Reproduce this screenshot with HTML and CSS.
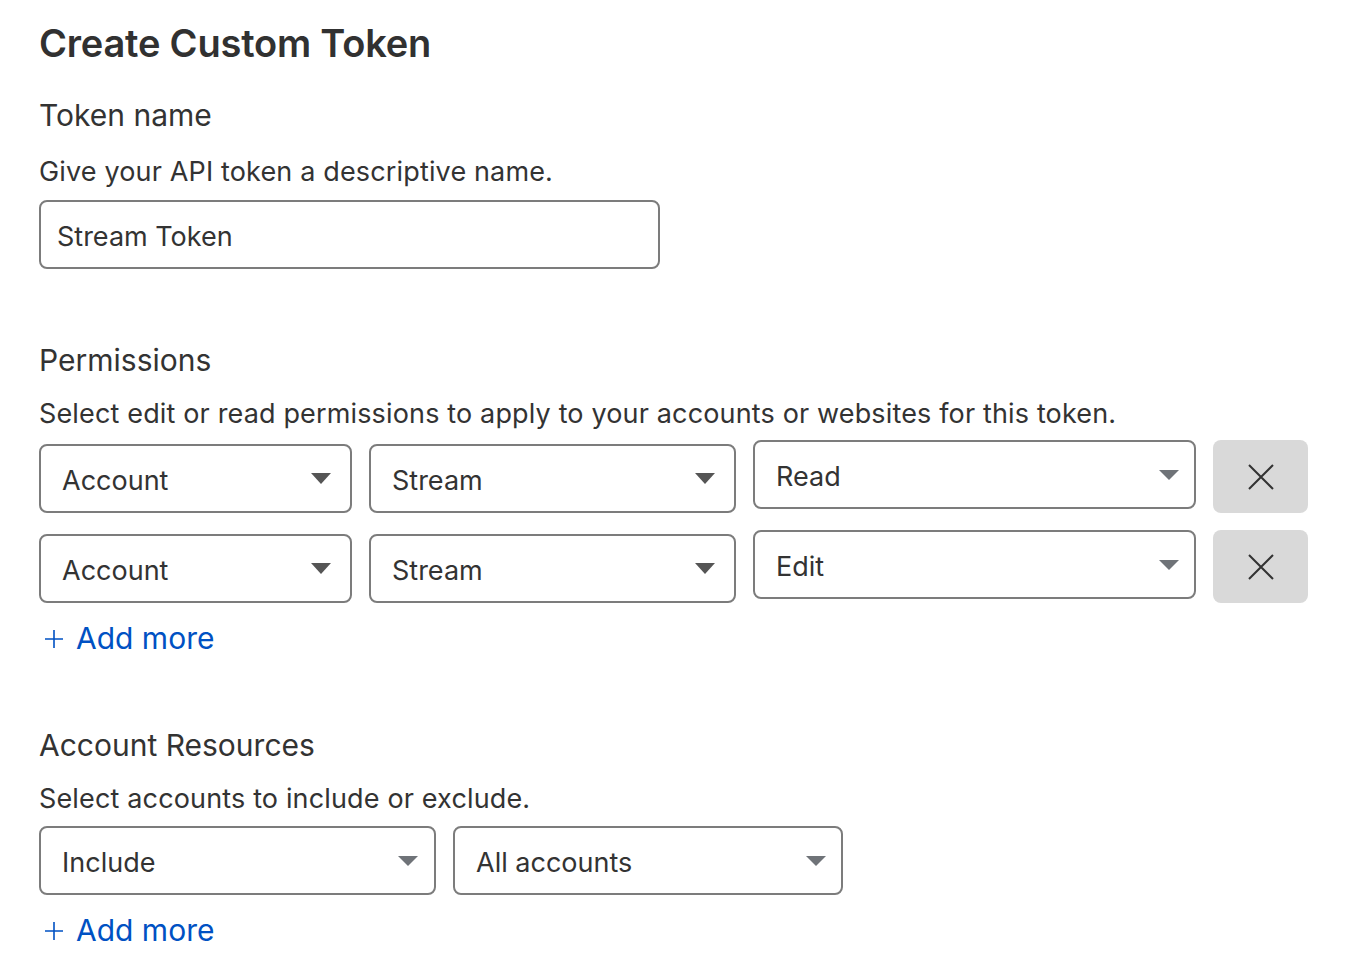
FILE: index.html
```html
<!DOCTYPE html>
<html lang="en">
<head>
<meta charset="utf-8">
<title>Create Custom Token</title>
<link rel="stylesheet" href="styles.css">
</head>
<body>
<main class="page">
  <h1 class="title">Create Custom Token</h1>

  <section class="section">
    <h2 class="heading heading-first">Token name</h2>
    <p class="desc desc-first">Give your API token a descriptive name.</p>
    <div class="input">Stream Token</div>
  </section>

  <section class="section section-perm">
    <h2 class="heading">Permissions</h2>
    <p class="desc">Select edit or read permissions to apply to your accounts or websites for this token.</p>
    <div class="perm-rows">
      <div class="perm-row">
        <div class="select w-type shifted"><span>Account</span><i class="caret"></i></div>
        <div class="select w-item shifted"><span>Stream</span><i class="caret"></i></div>
        <div class="select w-level"><span>Read</span><i class="caret caret-light"></i></div>
        <button class="remove" type="button" aria-label="Remove"><svg width="26" height="26" viewBox="0 0 26 26"><path d="M1 1 L25 25 M25 1 L1 25" stroke="#333" stroke-width="2" fill="none"/></svg></button>
      </div>
      <div class="perm-row">
        <div class="select w-type shifted"><span>Account</span><i class="caret"></i></div>
        <div class="select w-item shifted"><span>Stream</span><i class="caret"></i></div>
        <div class="select w-level"><span>Edit</span><i class="caret caret-light"></i></div>
        <button class="remove" type="button" aria-label="Remove"><svg width="26" height="26" viewBox="0 0 26 26"><path d="M1 1 L25 25 M25 1 L1 25" stroke="#333" stroke-width="2" fill="none"/></svg></button>
      </div>
    </div>
    <a class="add-more" href="#"><svg class="plus" width="18" height="18" viewBox="0 0 18 18"><path d="M9 0 V18 M0 9 H18" stroke="#0051c3" stroke-width="1.6" fill="none"/></svg><span>Add more</span></a>
  </section>

  <section class="section section-res">
    <h2 class="heading">Account Resources</h2>
    <p class="desc">Select accounts to include or exclude.</p>
    <div class="res-row">
      <div class="select w-incl"><span>Include</span><i class="caret caret-light"></i></div>
      <div class="select w-acc"><span>All accounts</span><i class="caret caret-light"></i></div>
    </div>
    <a class="add-more" href="#"><svg class="plus" width="18" height="18" viewBox="0 0 18 18"><path d="M9 0 V18 M0 9 H18" stroke="#0051c3" stroke-width="1.6" fill="none"/></svg><span>Add more</span></a>
  </section>
</main>
</body>
</html>
```

FILE: styles.css
```css
* { box-sizing: border-box; }

html, body {
  margin: 0;
  padding: 0;
  background: #ffffff;
}

body {
  font-family: Inter, "Noto Sans", "Liberation Sans", sans-serif;
  color: #333333;
}

.page {
  padding: 21px 0 0 39px;
  display: flex;
  flex-direction: column;
}

.title {
  margin: 0;
  font-size: 38px;
  line-height: 44px;
  font-weight: 600;
  color: #313131;
  letter-spacing: -0.2px;
}

.section {
  display: flex;
  flex-direction: column;
  align-items: flex-start;
}

.heading {
  margin: 0;
  font-size: 30px;
  line-height: 34px;
  font-weight: 400;
  color: #333;
}

.heading-first { margin-top: 33px; }

.desc {
  margin: 21px 0 0;
  font-size: 27px;
  line-height: 32px;
  letter-spacing: 0.15px;
  color: #333;
}

.desc-first { margin-top: 24px; }

.input {
  margin-top: 12px;
  width: 621px;
  height: 69px;
  border: 2px solid #7c7c7c;
  border-radius: 8px;
  padding: 3px 16px 0;
  display: flex;
  align-items: center;
  font-size: 27px;
  color: #333;
}

.section-perm { margin-top: 74px; }
.section-res { margin-top: 73px; }

.perm-rows {
  margin-top: 10px;
  display: flex;
  flex-direction: column;
  gap: 17px;
}

.perm-row {
  display: flex;
  align-items: flex-start;
  gap: 17px;
}

.select {
  height: 69px;
  border: 2px solid #7c7c7c;
  border-radius: 8px;
  padding: 0 19px 0 21px;
  display: flex;
  align-items: center;
  justify-content: space-between;
  font-size: 27px;
  color: #333;
  background: #fff;
}

.select span { padding-top: 3px; }

.shifted { margin-top: 4px; }

.w-type { width: 313px; }
.w-item { width: 367px; }
.w-level { width: 443px; padding-right: 15px; }
.w-incl { width: 397px; padding-right: 16px; }
.w-acc { width: 390px; padding-right: 15px; }

.caret {
  width: 0;
  height: 0;
  border-left: 10px solid transparent;
  border-right: 10px solid transparent;
  border-top: 11px solid #555555;
}

.caret-light {
  border-top: 10px solid #6f7378;
}

.remove {
  width: 95px;
  height: 73px;
  border: none;
  border-radius: 8px;
  background: #d9d9d9;
  display: flex;
  align-items: center;
  justify-content: center;
  padding: 0;
}

.res-row {
  margin-top: 11px;
  display: flex;
  gap: 17px;
}

.add-more {
  margin-top: 18px;
  display: flex;
  align-items: center;
  gap: 13px;
  padding-left: 6px;
  font-size: 30px;
  line-height: 34px;
  color: #0051c3;
  text-decoration: none;
}

.plus { margin-top: 1px; }
```
